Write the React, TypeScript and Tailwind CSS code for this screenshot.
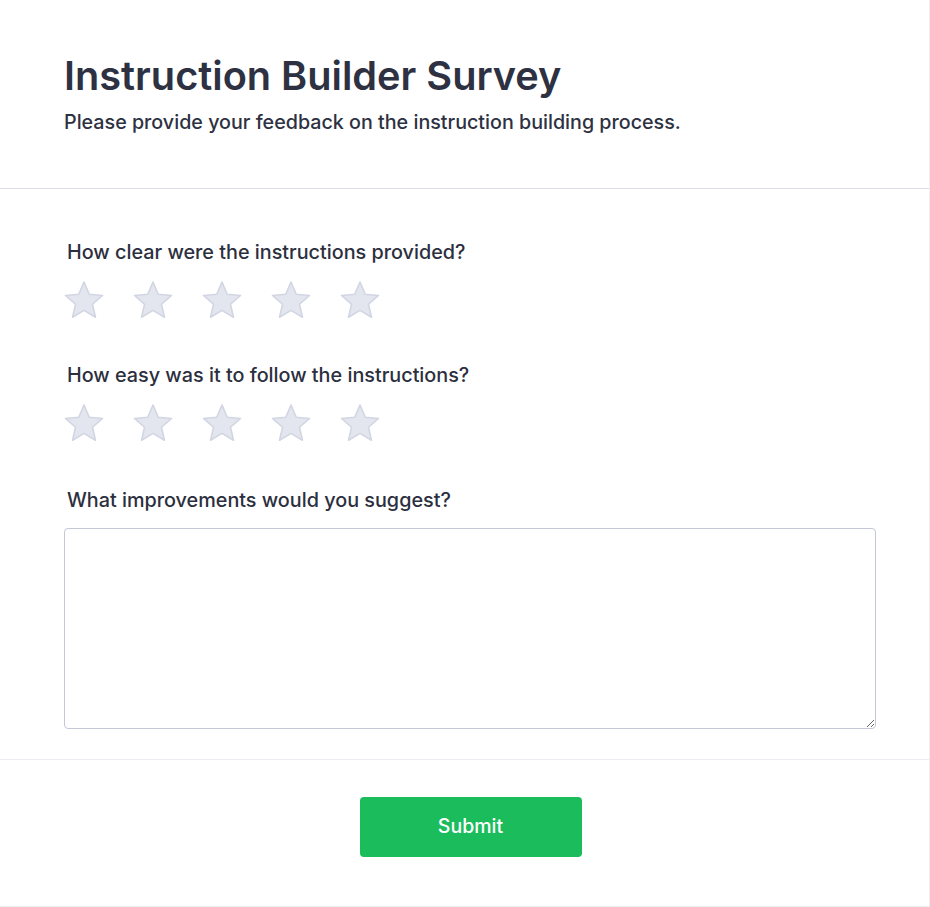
import type { ReactElement } from 'react';

const starPoints = (() => {
  const cx = 20;
  const cy = 21.5;
  const outer = 19.5;
  const inner = 8.9;
  const pts: string[] = [];
  for (let i = 0; i < 10; i++) {
    const r = i % 2 === 0 ? outer : inner;
    const a = ((-90 + i * 36) * Math.PI) / 180;
    pts.push(`${(cx + r * Math.cos(a)).toFixed(2)},${(cy + r * Math.sin(a)).toFixed(2)}`);
  }
  return pts.join(' ');
})();

function Star(): ReactElement {
  return (
    <svg width="40" height="40" viewBox="0 0 40 40" className="block">
      <polygon
        points={starPoints}
        fill="#e3e6ef"
        stroke="#d2d6e2"
        strokeWidth="1.6"
        strokeLinejoin="round"
      />
    </svg>
  );
}

function RatingQuestion({ label, last }: { label: string; last?: boolean }) {
  return (
    <div className={last ? 'mb-[43px]' : 'mb-[41px]'}>
      <p className="pl-[3px] text-[19.8px] leading-[28px] font-medium text-[#2c2f3e]">{label}</p>
      <div className="mt-[14px] flex gap-[29px]">
        {[1, 2, 3, 4, 5].map((n) => (
          <button key={n} type="button" aria-label={`${n} star`}>
            <Star />
          </button>
        ))}
      </div>
    </div>
  );
}

export default function App() {
  return (
    <div
      className="min-h-[907px] w-full bg-white border-r border-b border-[#efeff3] text-[#2c2f3e]"
      style={{ fontFamily: 'Inter, "Noto Sans", sans-serif' }}
    >
      <header className="pl-16 pr-[53px] pt-[52px] pb-[52px] border-b border-[#dcdde8]">
        <h1 className="text-[39.7px] leading-[48px] font-semibold text-[#2d3142]">Instruction Builder Survey</h1>
        <p className="mt-2 text-[19.7px] leading-[28px] font-medium text-[#2d3142]">
          Please provide your feedback on the instruction building process.
        </p>
      </header>

      <section className="pl-16 pr-[53px] pt-[49px] pb-[30px] border-b border-[#ececf2]">
        <RatingQuestion label="How clear were the instructions provided?" />
        <RatingQuestion label="How easy was it to follow the instructions?" last />
        <p className="pl-[3px] text-[19.8px] leading-[28px] font-medium text-[#2c2f3e]">
          What improvements would you suggest?
        </p>
        <textarea className="mt-[14px] block w-full h-[201px] border border-[#c4c7d6] rounded-[4px] p-3 text-[16px] outline-none" />
      </section>

      <footer className="flex justify-center pl-16 pr-[52px] pt-[37px] pb-[45px]">
        <button
          type="button"
          className="w-[222px] h-[60px] rounded-[4px] bg-[#1abc5b] text-white text-[19.5px] font-medium"
        >
          Submit
        </button>
      </footer>
    </div>
  );
}
